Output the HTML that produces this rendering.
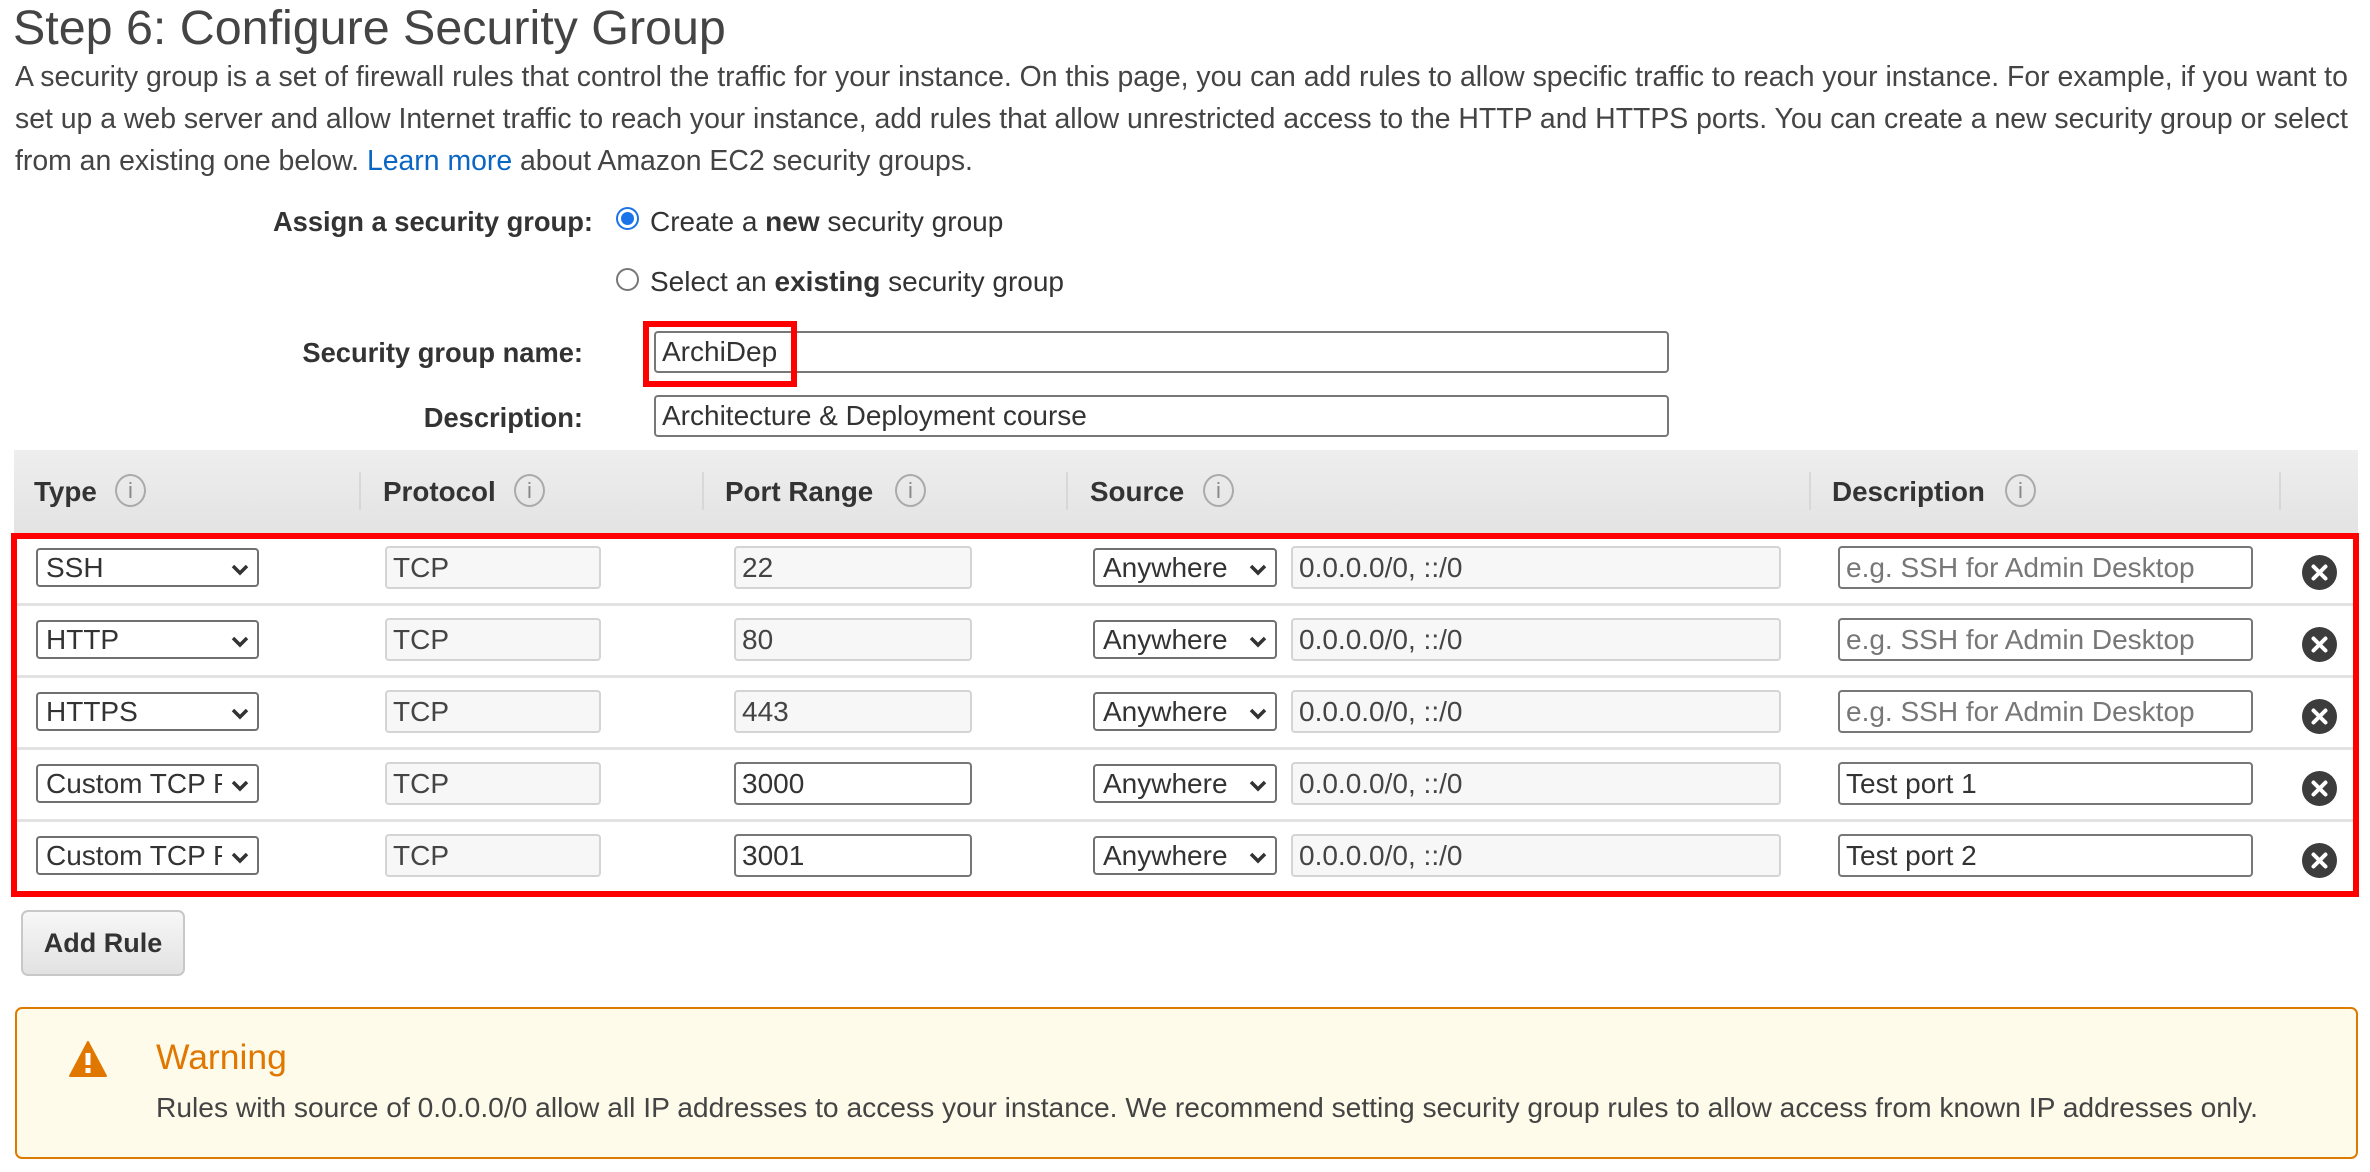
<!DOCTYPE html>
<html><head><meta charset="utf-8"><style>
*{box-sizing:border-box;margin:0;padding:0}
body{width:2370px;height:1172px;background:#fff;font-family:"Liberation Sans",Arial,sans-serif;color:#333;position:relative;overflow:hidden}
.a{position:absolute;white-space:nowrap}
.p{font-size:28.4px;color:#444;left:15px}
.lbl{font-weight:bold;font-size:27.3px;color:#333;text-align:right}
.inp{position:absolute;border:2px solid #777;border-radius:4px;background:#fff;font-size:28px;line-height:1;padding-left:6px;display:flex;align-items:center;color:#333;white-space:nowrap;overflow:hidden}
.ro{border:2px solid #d4d4d4;background:#f7f7f7;color:#444}
.ph{color:#777}
.sel{position:absolute;border:2px solid #707070;border-radius:4px;background:#fff;font-size:28px;display:flex;align-items:center;padding-left:8px;color:#333;overflow:hidden;white-space:nowrap}
.sel span{display:block;white-space:nowrap;overflow:hidden}
.sel svg{position:absolute;right:7px;top:13px}
.hd{position:absolute;font-weight:bold;font-size:27.8px;color:#333;top:476px}
.ic{position:absolute;width:31px;height:33px;border:2px solid #aaa;border-radius:50%;top:474px;font-size:22px;color:#888;text-align:center;line-height:29px;font-family:"Liberation Sans",sans-serif}
.sep{position:absolute;width:2px;background:#d8d8d8;top:472px;height:38px}
.rs{position:absolute;left:17px;width:2336px;height:3px;background:#e2e2e2}
.x{position:absolute;width:35px;height:35px;border-radius:50%;background:#3c3c3c;left:2302px}
</style></head><body>
<div class="a" style="left:13px;top:0px;font-size:48.4px;color:#444">Step 6: Configure Security Group</div>
<div class="a p" style="top:61px">A security group is a set of firewall rules that control the traffic for your instance. On this page, you can add rules to allow specific traffic to reach your instance. For example, if you want to</div>
<div class="a p" style="top:103px">set up a web server and allow Internet traffic to reach your instance, add rules that allow unrestricted access to the HTTP and HTTPS ports. You can create a new security group or select</div>
<div class="a p" style="top:145px">from an existing one below. <span style="color:#0a66c2">Learn more</span> about Amazon EC2 security groups.</div>

<div class="a lbl" style="right:1777px;top:206px">Assign a security group:</div>
<div class="a" style="left:616px;top:207px;width:23px;height:23px;border-radius:50%;border:2px solid #1a73e8;background:#fff"><div style="position:absolute;left:3px;top:3px;width:13px;height:13px;border-radius:50%;background:#1a73e8"></div></div>
<div class="a" style="left:650px;top:206px;font-size:28px;color:#333">Create a <b>new</b> security group</div>
<div class="a" style="left:616px;top:268px;width:23px;height:23px;border-radius:50%;border:2px solid #777;background:#fff"></div>
<div class="a" style="left:650px;top:266px;font-size:28px;color:#333">Select an <b>existing</b> security group</div>

<div class="a lbl" style="right:1787px;top:337px">Security group name:</div>
<div class="inp" style="left:654px;top:331px;width:1015px;height:42px">ArchiDep</div>
<div class="a" style="left:643px;top:321px;width:154px;height:66px;border:6px solid #f00"></div>
<div class="a lbl" style="right:1787px;top:402px">Description:</div>
<div class="inp" style="left:654px;top:395px;width:1015px;height:42px">Architecture &amp; Deployment course</div>

<div class="a" style="left:14px;top:450px;width:2344px;height:83px;background:linear-gradient(#eee,#e3e3e3)"></div>
<div class="hd" style="left:34px">Type</div><div class="ic" style="left:115px">i</div>
<div class="sep" style="left:359px"></div>
<div class="hd" style="left:383px">Protocol</div><div class="ic" style="left:514px">i</div>
<div class="sep" style="left:702px"></div>
<div class="hd" style="left:725px">Port Range</div><div class="ic" style="left:895px">i</div>
<div class="sep" style="left:1066px"></div>
<div class="hd" style="left:1090px">Source</div><div class="ic" style="left:1203px">i</div>
<div class="sep" style="left:1809px"></div>
<div class="hd" style="left:1832px">Description</div><div class="ic" style="left:2005px">i</div>
<div class="sep" style="left:2279px"></div>

<div class="rs" style="top:603px"></div>
<div class="rs" style="top:675px"></div>
<div class="rs" style="top:747px"></div>
<div class="rs" style="top:819px"></div>

<div id="rows"></div>
<script>
var rows=[["SSH","22",0,"e.g. SSH for Admin Desktop",1],["HTTP","80",0,"e.g. SSH for Admin Desktop",1],["HTTPS","443",0,"e.g. SSH for Admin Desktop",1],["Custom TCP Rule","3000",1,"Test port 1",0],["Custom TCP Rule","3001",1,"Test port 2",0]];
var chev='<svg width="20" height="14" viewBox="0 0 20 14"><polyline points="3,3 10,10 17,3" fill="none" stroke="#333" stroke-width="3.5"/></svg>';
var h='';
rows.forEach(function(r,i){
 var t=548+i*72;
 h+='<div class="sel" style="left:36px;top:'+t+'px;width:223px;height:39px"><span style="width:176px">'+r[0]+'</span>'+chev+'</div>';
 h+='<div class="inp ro" style="left:385px;top:'+(t-2)+'px;width:216px;height:43px">TCP</div>';
 h+='<div class="inp'+(r[2]?'':' ro')+'" style="left:734px;top:'+(t-2)+'px;width:238px;height:43px">'+r[1]+'</div>';
 h+='<div class="sel" style="left:1093px;top:'+t+'px;width:184px;height:39px"><span>Anywhere</span>'+chev+'</div>';
 h+='<div class="inp ro" style="left:1291px;top:'+(t-2)+'px;width:490px;height:43px">0.0.0.0/0, ::/0</div>';
 h+='<div class="inp'+(r[4]?' ph':'')+'" style="left:1838px;top:'+(t-2)+'px;width:415px;height:43px">'+r[3]+'</div>';
 h+='<div class="x" style="top:'+(t+7)+'px"><svg width="35" height="35" viewBox="0 0 35 35"><path d="M11.5 11.5L23.5 23.5M23.5 11.5L11.5 23.5" stroke="#fff" stroke-width="4" stroke-linecap="round"/></svg></div>';
});
document.getElementById('rows').innerHTML=h;
</script>
<div class="a" style="left:11px;top:533px;width:2348px;height:364px;border:6px solid #f00"></div>

<div class="a" style="left:21px;top:910px;width:164px;height:66px;border:2px solid #c8c8c8;border-radius:7px;background:linear-gradient(#f7f7f7,#e2e2e2);font-weight:bold;font-size:27px;color:#333;text-align:center;line-height:62px">Add Rule</div>

<div class="a" style="left:15px;top:1007px;width:2343px;height:152px;border:2px solid #dd7b00;border-radius:7px;background:#fffbea"></div>
<svg class="a" style="left:68px;top:1040px" width="40" height="38" viewBox="0 0 40 38"><path d="M20 2 L38 36 L2 36 Z" fill="#e07700" stroke="#e07700" stroke-width="2" stroke-linejoin="round"/><rect x="17.5" y="13" width="5" height="12" fill="#fff"/><rect x="17.5" y="28" width="5" height="5" fill="#fff"/></svg>
<div class="a" style="left:156px;top:1037px;font-size:35.5px;color:#e07700">Warning</div>
<div class="a" style="left:156px;top:1091px;font-size:28.2px;color:#444">Rules with source of 0.0.0.0/0 allow all IP addresses to access your instance. We recommend setting security group rules to allow access from known IP addresses only.</div>
</body></html>
